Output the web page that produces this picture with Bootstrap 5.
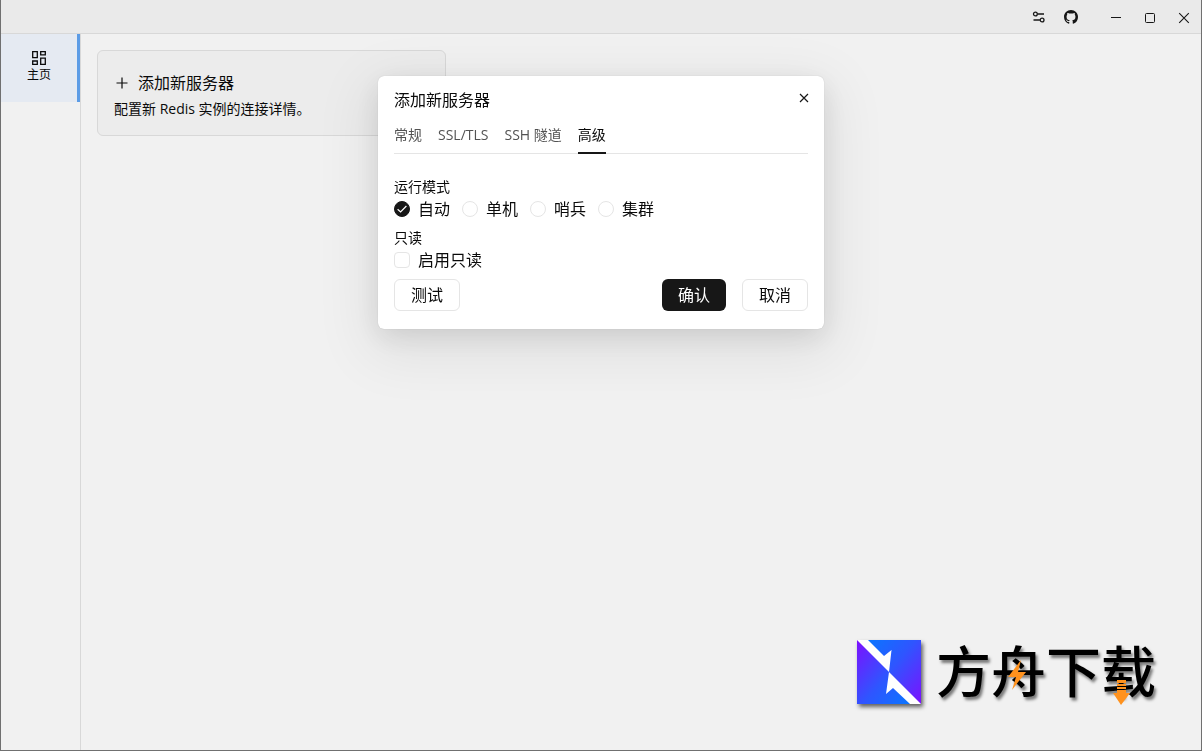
<!DOCTYPE html>
<html lang="zh-CN">
<head>
<meta charset="utf-8">
<meta name="viewport" content="width=device-width, initial-scale=1">
<title>添加新服务器</title>
<link href="https://cdn.jsdelivr.net/npm/bootstrap@5.3.0/dist/css/bootstrap.min.css" rel="stylesheet">
<style>
  :root { --line: #d8d8d8; --soft: #e5e5e5; --ink: #171717; }
  body { font-family: "Open Sans", "Noto Sans CJK SC", sans-serif; font-size: 16px; color: #0a0a0a; background: #f1f1f1; }
  .app-window { border: 1px solid #707070; border-top: 0; }
  .title-bar { height: 34px; background: #eaeaea; border-bottom: 1px solid var(--line); }
  .tool-btn { width: 32px; height: 32px; color: var(--ink); line-height: 1; }
  .win-btn { width: 34px; height: 32px; color: var(--ink); line-height: 1; }
  .side-bar { width: 80px; border-right: 1px solid var(--line); }
  .side-link { height: 68px; padding: 16px 0; background: #e5eaf2; border-right: 3px solid #5c9ce6; font-size: 12px; line-height: 18px; color: #0a0a0a; }
  .server-grid { display: grid; grid-template-columns: repeat(3, 1fr); gap: 20px; }
  .server-card { background: #ececec; border: 1px solid var(--line); border-radius: 6px; padding: 20px 16px 15px; color: inherit; }
  .server-card h2 { font-size: 16px; line-height: 24px; font-weight: 400; }
  .server-card p { font-size: 14px; line-height: 22px; margin-top: 3px; }
  .server-dialog { max-width: 446px; margin: 76px auto 0; }
  .server-dialog .modal-content { border: 0; border-radius: 6px; padding: 12px 16px 18px; color: #0a0a0a; box-shadow: 0 0 1px rgba(0,0,0,.25), 0 16px 56px 12px rgba(0,0,0,.07), 0 8px 28px rgba(0,0,0,.1); }
  .server-dialog h1 { font-size: 16px; line-height: 24px; font-weight: 400; }
  .close-btn { width: 24px; height: 24px; color: var(--ink); margin: -4px -8px 0 0; line-height: 1; }
  .form-tabs { border-bottom: 1px solid var(--soft); margin: 8px 0 22px; gap: 16px; }
  .form-tabs button { font-size: 14px; line-height: 30px; color: #525252; padding: 0 0 2px; border: 0; border-bottom: 2px solid transparent; background: none; margin-bottom: -1px; }
  .form-tabs button.active { color: #0a0a0a; border-color: var(--ink); }
  .field-set + .field-set { margin-top: 7px; }
  .field-set legend { font-size: 14px; line-height: 22px; float: none; }
  .choices { gap: 12px; line-height: 22px; }
  .choice { gap: 8px; }
  .choice .form-check-input { width: 16px; height: 16px; margin: 0; border: 1px solid var(--soft); box-shadow: none; }
  .choice .form-check-input:checked { background-color: var(--ink); border-color: var(--ink); background-size: 16px 16px;
    background-position: center; background-image: url("data:image/svg+xml,%3Csvg xmlns='http://www.w3.org/2000/svg' viewBox='0 0 16 16'%3E%3Cpath d='M3.6 8.2l3 2.8 5.8-6' fill='none' stroke='%23fff' stroke-width='1.2'/%3E%3C/svg%3E"); }
  .dialog-btn { height: 32px; padding: 0 16px; font-size: 16px; line-height: 30px; border-radius: 6px; border: 1px solid var(--soft); background: #fff; color: #0a0a0a; }
  .dialog-btn.confirm { background: var(--ink); border: 0; color: #fff; line-height: 32px; }
  .dialog-foot { margin-top: 8px; }
  .site-mark { right: 45px; bottom: 46px; gap: 15px; z-index: 1; }
  .site-mark svg.mark-logo { filter: drop-shadow(2px 3px 2px rgba(0,0,0,.6)); }
  .site-name { font-family: "Noto Sans CJK SC", sans-serif; font-size: 55px; line-height: 56px; padding-bottom: 8px; font-weight: 500; color: #000; text-shadow: 2px 3px 3px rgba(0,0,0,.5); }
  .name-deco { left: 0; top: 0; width: 100%; height: 100%; overflow: visible; }
</style>
</head>
<body>
<div class="app-window d-flex flex-column min-vh-100 position-relative">
  <header class="title-bar d-flex justify-content-end align-items-start flex-shrink-0">
    <button class="tool-btn btn p-0 border-0" aria-label="设置">
      <svg width="14" height="14" viewBox="0 0 14 14" fill="none" stroke="currentColor" stroke-width="1.3"><circle cx="3.4" cy="4" r="1.9"/><path d="M5.6 4H12M1.5 10h6.4"/><circle cx="10.1" cy="10" r="1.9"/></svg>
    </button>
    <button class="tool-btn btn p-0 border-0" aria-label="GitHub">
      <svg width="14" height="14" viewBox="0 0 16 16" fill="currentColor"><path d="M8 0C3.58 0 0 3.58 0 8c0 3.54 2.29 6.53 5.47 7.59.4.07.55-.17.55-.38 0-.19-.01-.82-.01-1.49-2.01.37-2.53-.49-2.69-.94-.09-.23-.48-.94-.82-1.13-.28-.15-.68-.52-.01-.53.63-.01 1.08.58 1.23.82.72 1.21 1.87.87 2.33.66.07-.52.28-.87.51-1.07-1.78-.2-3.64-.89-3.64-3.95 0-.87.31-1.59.82-2.15-.08-.2-.36-1.02.08-2.12 0 0 .67-.21 2.2.82A7.6 7.6 0 0 1 8 3.86c.68 0 1.36.09 2 .27 1.53-1.04 2.2-.82 2.2-.82.44 1.1.16 1.92.08 2.12.51.56.82 1.27.82 2.15 0 3.07-1.87 3.75-3.65 3.95.29.25.54.73.54 1.48 0 1.07-.01 1.93-.01 2.2 0 .21.15.46.55.38A8.01 8.01 0 0 0 16 8c0-4.42-3.58-8-8-8z"/></svg>
    </button>
    <div class="d-flex ps-2 ms-1">
      <button class="win-btn btn p-0 border-0" aria-label="最小化"><svg width="12" height="12" viewBox="0 0 12 12" stroke="currentColor"><path d="M1 5.5h10"/></svg></button>
      <button class="win-btn btn p-0 border-0" aria-label="最大化"><svg width="12" height="12" viewBox="0 0 12 12" fill="none" stroke="currentColor"><rect x="1.5" y="1.5" width="9" height="9" rx="1"/></svg></button>
      <button class="win-btn btn p-0 border-0" aria-label="关闭"><svg width="12" height="12" viewBox="0 0 12 12" stroke="currentColor" stroke-width="1.1"><path d="M1.2 1.2l9.600 9.600M10.800 1.200l-9.600 9.600"/></svg></button>
    </div>
  </header>
  <div class="d-flex flex-grow-1">
    <nav class="side-bar flex-shrink-0">
      <a href="#" class="side-link d-flex flex-column align-items-center text-decoration-none">
        <svg width="16" height="16" viewBox="0 0 16 16" fill="none" stroke="currentColor" stroke-width="1.3"><path d="M1.700 1.700h4.600v6H1.700zM9.700 1.700h4.600v3.200H9.700zM1.700 11h4.600v3.300H1.700zM9.700 8.200h4.600v6.100H9.700z"/></svg>
        <span>主页</span>
      </a>
    </nav>
    <main class="flex-grow-1 p-3">
      <div class="server-grid">
        <a href="#" class="server-card d-block text-decoration-none">
          <h2 class="d-flex align-items-center gap-2 mb-0">
            <svg width="16" height="16" viewBox="0 0 16 16" stroke="currentColor" stroke-width="1.2"><path d="M8 2.500v11M2.500 8h11"/></svg>
            <span>添加新服务器</span>
          </h2>
          <p class="mb-0">配置新 Redis 实例的连接详情。</p>
        </a>
      </div>
    </main>
  </div>
  <div class="site-mark position-absolute d-flex align-items-center">
    <svg class="mark-logo" width="64" height="64" viewBox="0 0 64 64">
      <defs>
        <linearGradient id="ga" x1="0" y1="0" x2="1" y2="1"><stop offset="0" stop-color="#0a76ff"/><stop offset=".45" stop-color="#2f55ff"/><stop offset="1" stop-color="#7d10ff"/></linearGradient>
        <linearGradient id="gb" x1="0" y1="0" x2="1" y2="1"><stop offset="0" stop-color="#7d10ff"/><stop offset=".55" stop-color="#2f55ff"/><stop offset="1" stop-color="#0a76ff"/></linearGradient>
      </defs>
      <path d="M0 0h64v64H0z" fill="#fff"/>
      <path d="M11 0H64V64L32 32 34.500 10 27 16z" fill="url(#ga)"/>
      <path d="M0 0L32 32 29 54 36 48 53 64H0z" fill="url(#gb)"/>
    </svg>
    <div class="site-name position-relative">方舟下载<svg class="name-deco position-absolute" viewBox="0 0 220 64"><g fill="#ff921e"><path d="M85 20L72 37h8l-4 13 14-18h-8z"/><path d="M181 40h9v3h-9zM181 44h9v2h-9zM181 47h9v2h-9zM181 50h9v3h4l-9 12-8-12h4z"/></g></svg></div>
  </div>
</div>

<div class="modal d-block" role="dialog" aria-modal="true" aria-labelledby="dialogTitle">
  <div class="modal-dialog server-dialog">
    <form class="modal-content">
      <div class="d-flex justify-content-between align-items-start">
        <h1 id="dialogTitle" class="mb-0">添加新服务器</h1>
        <button type="button" class="close-btn btn p-0 border-0" aria-label="关闭"><svg width="10" height="10" viewBox="0 0 10 10" stroke="currentColor" stroke-width="1.2"><path d="M1 1l8 8M9 1L1 9"/></svg></button>
      </div>
      <div class="form-tabs d-flex" role="tablist">
        <button type="button" role="tab">常规</button>
        <button type="button" role="tab">SSL/TLS</button>
        <button type="button" role="tab">SSH 隧道</button>
        <button type="button" role="tab" class="active" aria-selected="true">高级</button>
      </div>
      <fieldset class="field-set">
        <legend class="mb-0">运行模式</legend>
        <div class="choices d-flex">
          <div class="choice d-flex align-items-center"><input class="form-check-input" type="radio" name="mode" id="modeAuto" checked><label for="modeAuto">自动</label></div>
          <div class="choice d-flex align-items-center"><input class="form-check-input" type="radio" name="mode" id="modeSingle"><label for="modeSingle">单机</label></div>
          <div class="choice d-flex align-items-center"><input class="form-check-input" type="radio" name="mode" id="modeSentinel"><label for="modeSentinel">哨兵</label></div>
          <div class="choice d-flex align-items-center"><input class="form-check-input" type="radio" name="mode" id="modeCluster"><label for="modeCluster">集群</label></div>
        </div>
      </fieldset>
      <fieldset class="field-set">
        <legend class="mb-0">只读</legend>
        <div class="choices d-flex">
          <div class="choice d-flex align-items-center"><input class="form-check-input" type="checkbox" id="readonly"><label for="readonly">启用只读</label></div>
        </div>
      </fieldset>
      <div class="dialog-foot d-flex gap-3">
        <button type="button" class="dialog-btn me-auto">测试</button>
        <button type="submit" class="dialog-btn confirm">确认</button>
        <button type="button" class="dialog-btn">取消</button>
      </div>
    </form>
  </div>
</div>
<script src="https://cdn.jsdelivr.net/npm/bootstrap@5.3.0/dist/js/bootstrap.bundle.min.js"></script>
</body>
</html>
